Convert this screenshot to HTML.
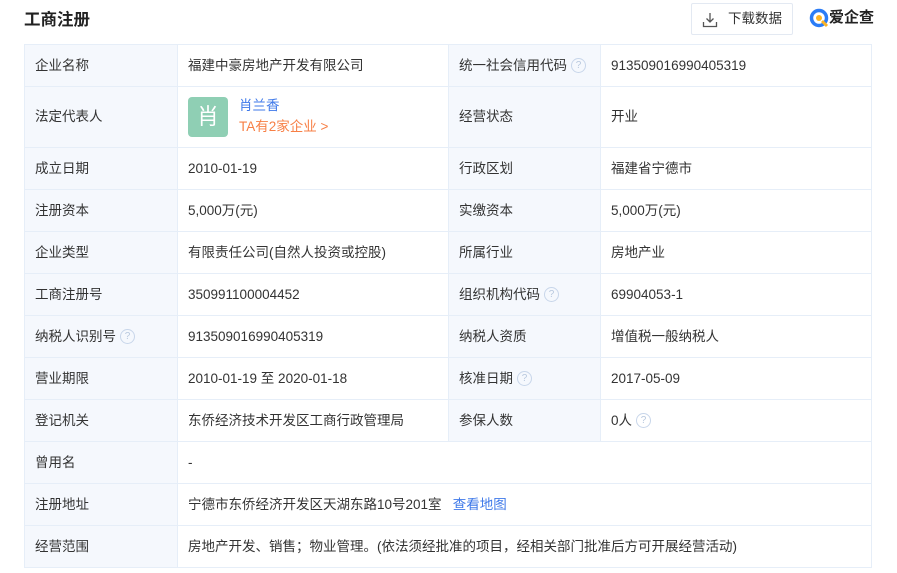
<!DOCTYPE html>
<html><head><meta charset="utf-8"><style>
*{margin:0;padding:0;box-sizing:border-box}
body{width:897px;height:573px;background:#fff;font-family:"Liberation Sans","Noto Sans CJK SC",sans-serif;color:#333;font-size:13.5px;position:relative;overflow:hidden}
.title{position:absolute;left:24px;top:9px;font-size:16.5px;line-height:22px;font-weight:bold;color:#222}
.btn{position:absolute;left:691px;top:3px;width:102px;height:32px;border:1px solid #e3e9f2;border-radius:2px;font-size:13.5px;line-height:30px;padding-left:36px;color:#333}
.btn svg{position:absolute;left:10px;top:8px}
.logo{position:absolute;left:809px;top:8px;font-size:15px;line-height:20px;font-weight:bold;color:#222;display:flex;align-items:center}
table{position:absolute;left:24px;top:44px;border-collapse:collapse;width:848px}
td{border:1px solid #e6eef8;height:42px;padding:0 10px;vertical-align:middle;line-height:18px}
td span,td div,td a{line-height:18px}
td.l{background:#f5f8fd;width:153px}
td.l2{background:#f5f8fd;width:152px}
.q{display:inline-block;width:15px;height:15px;border:1px solid #c8d6ea;border-radius:50%;color:#b8c8de;font-size:10px;line-height:13px!important;text-align:center;vertical-align:top;margin-top:1px;margin-left:4px;font-family:"Liberation Sans",sans-serif}
a{color:#3f79e9;text-decoration:none}
</style></head><body>
<div class="title">工商注册</div>
<div class="btn"><svg width="16" height="16" viewBox="0 0 16 16" fill="none" stroke="#555" stroke-width="1.3"><path d="M8 1v9M4.5 6.5L8 10l3.5-3.5M1.5 10v4.5h13V10"/></svg>下载数据</div>
<div class="logo"><svg width="20" height="20" viewBox="0 0 20 20"><circle cx="10" cy="10" r="7.5" fill="none" stroke="#2b7cf6" stroke-width="3.5"/><circle cx="10" cy="10" r="3" fill="#fbb327"/><path d="M13 13l5 5" stroke="#fbb327" stroke-width="3"/></svg>爱企查</div>
<table>
<tr><td class="l">企业名称</td><td style="width:271px">福建中豪房地产开发有限公司</td><td class="l2">统一社会信用代码<span class="q">?</span></td><td>913509016990405319</td></tr>
<tr><td class="l" style="height:61px">法定代表人</td><td><div style="display:flex;align-items:center"><div style="width:40px;height:40px;background:#8fcfb4;border-radius:4px;color:#fff;font-size:22px;text-align:center;line-height:40px;margin-right:11px">肖</div><div><div style="color:#3f79e9;line-height:20px">肖兰香</div><div style="color:#f77f45;line-height:22px">TA有2家企业 &gt;</div></div></div></td><td class="l2">经营状态</td><td>开业</td></tr>
<tr><td class="l">成立日期</td><td>2010-01-19</td><td class="l2">行政区划</td><td>福建省宁德市</td></tr>
<tr><td class="l">注册资本</td><td>5,000万(元)</td><td class="l2">实缴资本</td><td>5,000万(元)</td></tr>
<tr><td class="l">企业类型</td><td>有限责任公司(自然人投资或控股)</td><td class="l2">所属行业</td><td>房地产业</td></tr>
<tr><td class="l">工商注册号</td><td>350991100004452</td><td class="l2">组织机构代码<span class="q">?</span></td><td>69904053-1</td></tr>
<tr><td class="l">纳税人识别号<span class="q">?</span></td><td>913509016990405319</td><td class="l2">纳税人资质</td><td>增值税一般纳税人</td></tr>
<tr><td class="l">营业期限</td><td>2010-01-19 至 2020-01-18</td><td class="l2">核准日期<span class="q">?</span></td><td>2017-05-09</td></tr>
<tr><td class="l">登记机关</td><td>东侨经济技术开发区工商行政管理局</td><td class="l2">参保人数</td><td>0人<span class="q">?</span></td></tr>
<tr><td class="l">曾用名</td><td colspan="3">-</td></tr>
<tr><td class="l">注册地址</td><td colspan="3">宁德市东侨经济开发区天湖东路10号201室 &nbsp;&nbsp;<a>查看地图</a></td></tr>
<tr><td class="l">经营范围</td><td colspan="3">房地产开发、销售；物业管理。(依法须经批准的项目，经相关部门批准后方可开展经营活动)</td></tr>
</table>
</body></html>
